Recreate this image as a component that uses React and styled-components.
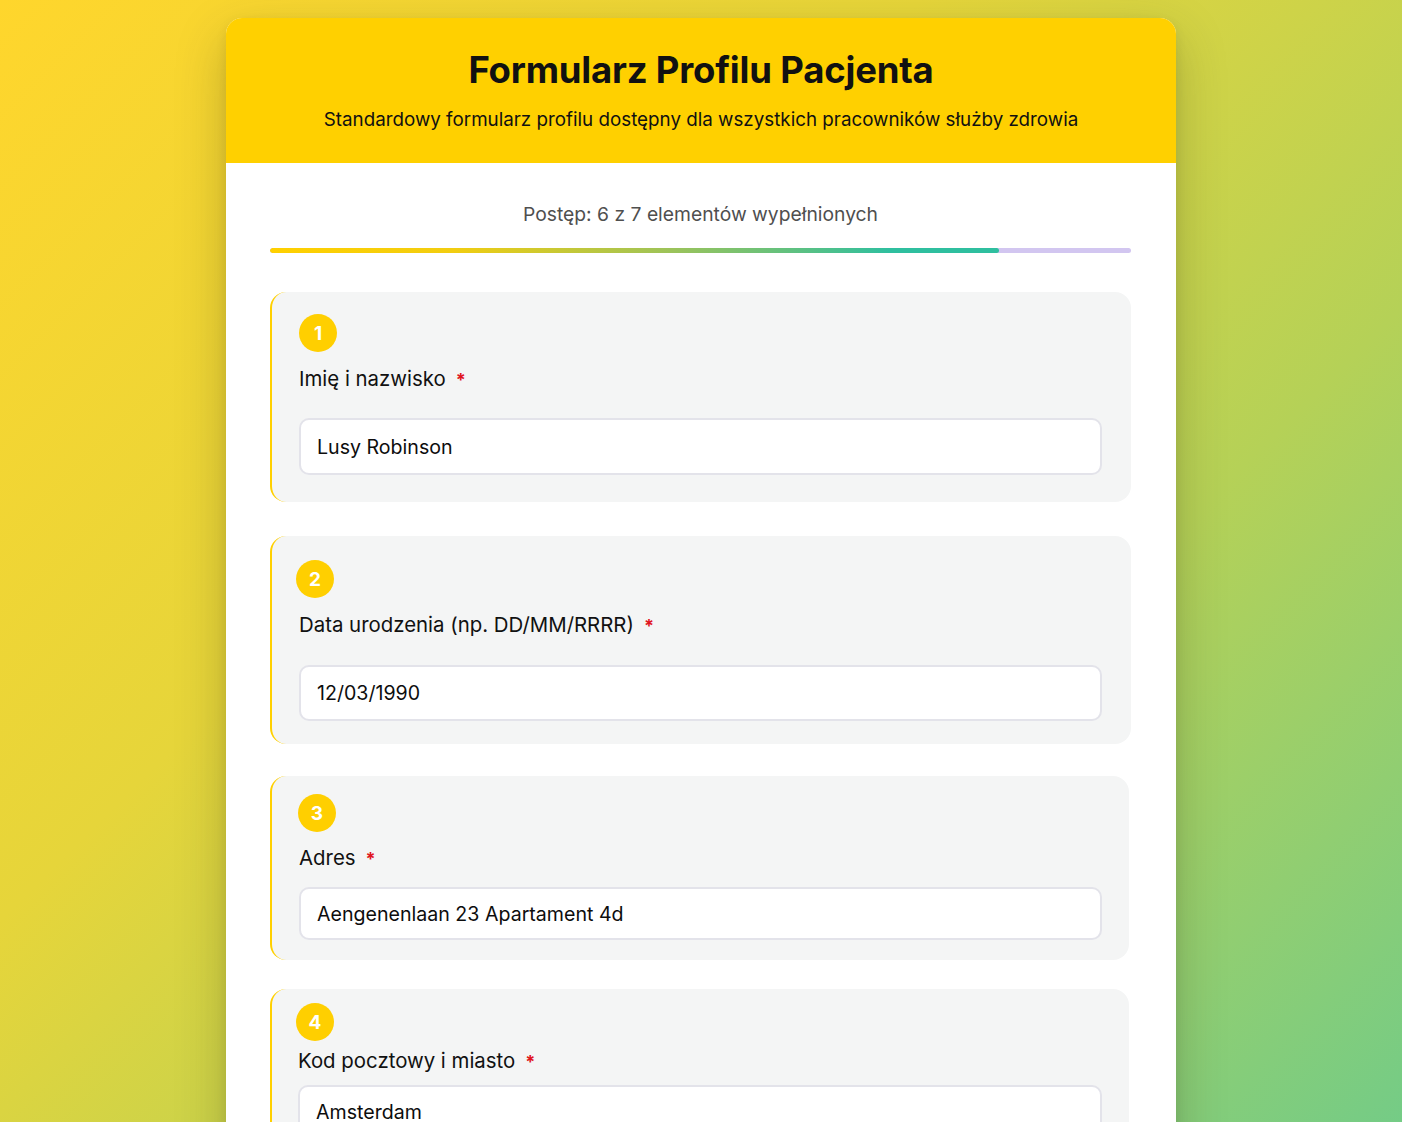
import React from "react";
import styled, { createGlobalStyle } from "styled-components";

const GlobalStyle = createGlobalStyle`
  html, body {
    margin: 0;
    padding: 0;
  }
  body {
    font-family: Inter, "Noto Sans", "Liberation Sans", sans-serif;
    background: linear-gradient(135deg, #ffd62c 0%, #e6d53a 35%, #b5d157 65%, #6ccb8c 100%);
    min-height: 1122px;
  }
`;

const Page = styled.div`
  display: flex;
  justify-content: center;
  padding: 18px 0 40px;
  min-height: 1122px;
  box-sizing: border-box;
`;

const Card = styled.div`
  width: 950px;
  background: #ffffff;
  border-radius: 16px;
  overflow: hidden;
  box-shadow: 0 20px 50px rgba(60, 60, 20, 0.28), 0 4px 12px rgba(0, 0, 0, 0.08);
`;

const Header = styled.header`
  background: #ffd000;
  height: 145px;
  box-sizing: border-box;
  padding-top: 29px;
  text-align: center;
`;

const Title = styled.h1`
  margin: 0;
  font-size: 36.5px;
  font-weight: 700;
  color: #111;
  line-height: 46px;
  letter-spacing: -0.2px;
`;

const Subtitle = styled.p`
  margin: 15px 0 0;
  font-size: 18.8px;
  font-weight: 400;
  color: #111;
  line-height: 24px;
`;

const Body = styled.div`
  padding: 39px 45px 0 44px;
`;

const ProgressText = styled.div`
  text-align: center;
  font-size: 19.3px;
  font-weight: 400;
  color: #4f4f4f;
  line-height: 24px;
`;

const Track = styled.div`
  margin-top: 22px;
  height: 5px;
  border-radius: 3px;
  background: #d2c6f0;
  overflow: hidden;
`;

const Fill = styled.div`
  height: 100%;
  border-radius: 3px;
  background: linear-gradient(90deg, #ffd000 0%, #f2cd10 25%, #9cc35a 55%, #2fbf9f 85%, #2fbf9f 100%);
`;

const Sections = styled.div`
  margin-top: 39px;
  display: flex;
  flex-direction: column;
`;

const Section = styled.section`
  background: #f4f5f5;
  border-radius: 16px;
  border-left: 2.5px solid #ffd000;
  padding: ${(p) => p.$pad};
  margin-bottom: ${(p) => p.$gap}px;
  width: ${(p) => p.$w}px;
  box-sizing: border-box;
`;

const Badge = styled.div`
  width: 38px;
  height: 38px;
  border-radius: 50%;
  background: #ffcf00;
  color: #fff;
  font-weight: 700;
  font-size: 19px;
  display: flex;
  align-items: center;
  justify-content: center;
  margin-left: ${(p) => p.$shift}px;
`;

const Label = styled.label`
  display: block;
  margin-top: ${(p) => p.$top}px;
  font-size: 20.4px;
  font-weight: 400;
  color: #111;
  line-height: 26px;
`;

const Star = styled.span`
  color: #e0141e;
  margin-left: 10px;
  font-weight: 700;
  font-size: 18px;
`;

const Input = styled.input`
  display: block;
  width: 100%;
  box-sizing: border-box;
  margin-top: ${(p) => p.$top}px;
  height: ${(p) => p.$h}px;
  border: 2px solid #e3e3ea;
  border-radius: 10px;
  background: #fff;
  padding: 0 16px;
  font-family: inherit;
  font-size: 19.6px;
  font-weight: 400;
  color: #0d0d0d;
  outline: none;
`;

const fields = [
  { n: 1, label: "Imię i nazwisko", value: "Lusy Robinson", pad: "22px 29px 27px 27px", gap: 34, w: 861, shift: 0, labelTop: 14, inputTop: 25, h: 57 },
  { n: 2, label: "Data urodzenia (np. DD/MM/RRRR)", value: "12/03/1990", pad: "24px 29px 23px 27px", gap: 32, w: 861, shift: -3, labelTop: 14, inputTop: 26, h: 56 },
  { n: 3, label: "Adres", value: "Aengenenlaan 23 Apartament 4d", pad: "18px 27px 20px 27px", gap: 29, w: 859, shift: -1, labelTop: 13, inputTop: 15, h: 53 },
  { n: 4, label: "Kod pocztowy i miasto", value: "Amsterdam", pad: "14px 27px 19px 26px", gap: 30, w: 859, shift: -2, labelTop: 7, inputTop: 10, h: 53 },
];

export default function App() {
  const done = 6;
  const total = 7;
  // the bar in the design sits slightly short of the exact ratio
  const filled = (done / total) * 98.8;
  return (
    <>
      <GlobalStyle />
      <Page>
        <Card>
          <Header>
            <Title>Formularz Profilu Pacjenta</Title>
            <Subtitle>
              Standardowy formularz profilu dostępny dla wszystkich pracowników służby zdrowia
            </Subtitle>
          </Header>
          <Body>
            <ProgressText>
              Postęp: {done} z {total} elementów wypełnionych
            </ProgressText>
            <Track>
              <Fill style={{ width: `${filled}%` }} />
            </Track>
            <Sections>
              {fields.map((f) => (
                <Section key={f.n} $pad={f.pad} $gap={f.gap} $w={f.w}>
                  <Badge $shift={f.shift}>{f.n}</Badge>
                  <Label $top={f.labelTop}>
                    {f.label}
                    <Star>*</Star>
                  </Label>
                  <Input $top={f.inputTop} $h={f.h} defaultValue={f.value} readOnly />
                </Section>
              ))}
            </Sections>
          </Body>
        </Card>
      </Page>
    </>
  );
}
